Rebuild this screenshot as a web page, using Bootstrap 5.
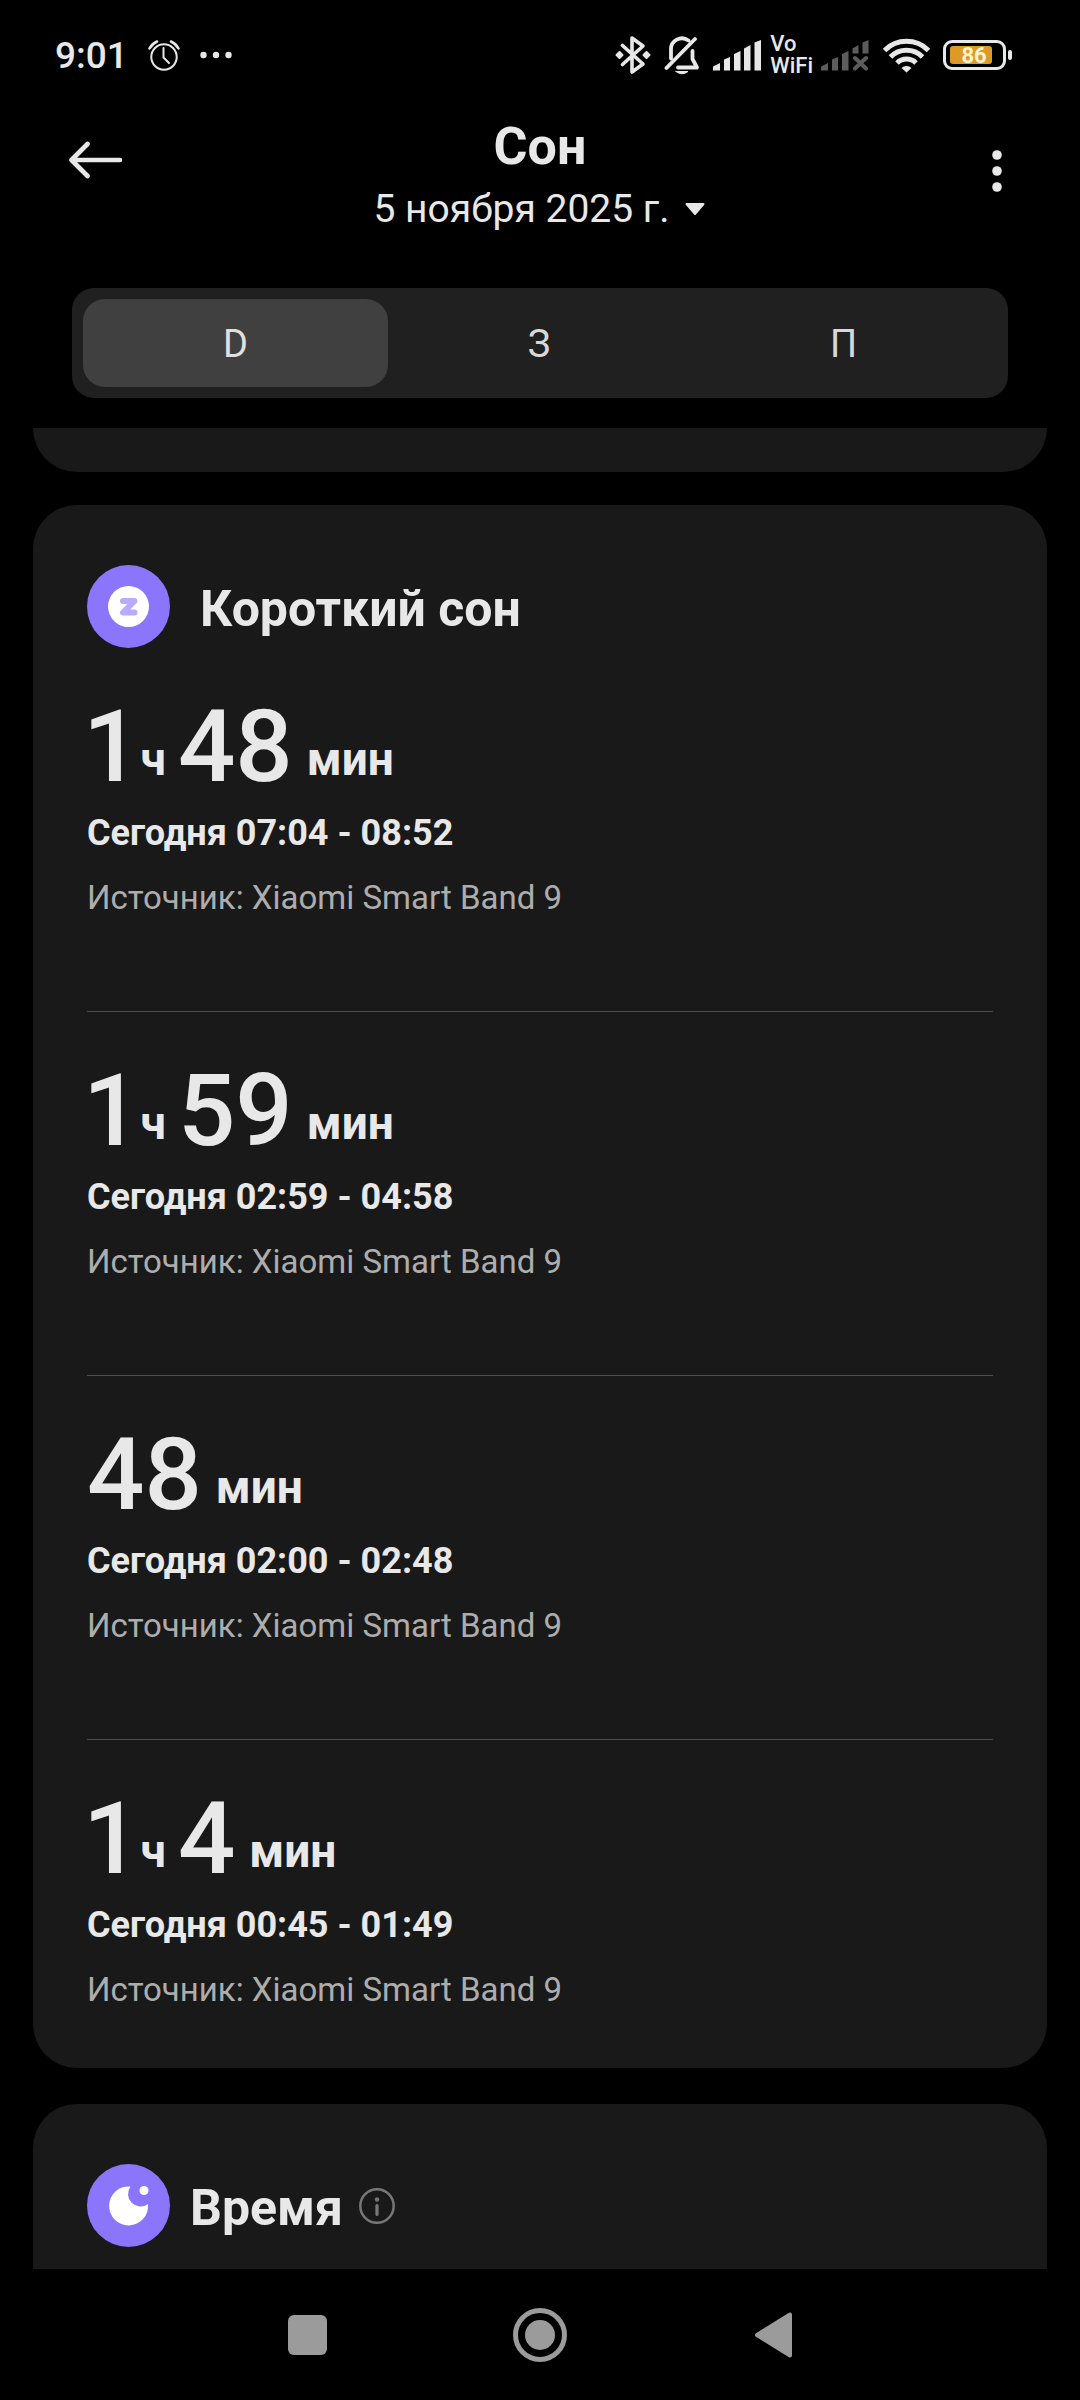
<!DOCTYPE html>
<html lang="ru">
<head>
<meta charset="utf-8">
<meta name="viewport" content="width=device-width, initial-scale=1">
<title>Сон</title>
<link href="https://cdn.jsdelivr.net/npm/bootstrap@5.3.0/dist/css/bootstrap.min.css" rel="stylesheet">
<style>
  body { background: #000; color: #e8e8e8; font-family: Roboto, "Noto Sans", sans-serif; }
  svg { display: block; flex: none; }
  .icon-btn { background: none; border: 0; padding: 0; color: inherit; }

  .status-bar { height: 110px; padding: 0 67px 0 55px; }
  .status-left { gap: 20px; }
  .status-time { font-size: 37px; font-weight: 500; line-height: 44px; padding-top: 2px; }
  .status-right { gap: 13px; }
  .signal-group { gap: 8px; }
  .vo-wifi { font-size: 22px; font-weight: 500; line-height: 22px; }
  .battery-level { font-size: 22px; font-weight: 700; font-family: Roboto, sans-serif; }

  .top-bar { padding: 0 68px; }
  .top-bar .icon-btn { flex: none; }
  .top-bar .side-btn { width: 54px; }
  .back-btn { height: 100px; }
  .menu-btn { height: 122px; }
  .title-block { padding-top: 2px; }
  .screen-title { font-size: 52px; font-weight: 700; line-height: 70px; }
  .date-btn { font-size: 39px; line-height: 54px; gap: 15px; }

  .period-tabs { margin: 52px 72px 30px; padding: 11px; border-radius: 22px; background: #202020; }
  .period-tabs .nav-link { height: 88px; padding: 3px 0 0; border-radius: 22px; font-size: 38px; color: #d8d8d8; }
  .period-tabs .nav-link.active { background: #404040; color: #e0e0e0; }

  .feed { padding: 0 33px; }
  .panel { background: #191919; border-radius: 44px; padding: 0 54px; }
  .panel-tail { height: 44px; border-radius: 0 0 44px 44px; margin-bottom: 33px; }
  .panel-naps { padding-top: 60px; margin-bottom: 36px; }
  .panel-cut { padding-top: 60px; border-radius: 44px 44px 0 0; }
  .panel-title { font-size: 50px; font-weight: 700; line-height: 60px; padding-top: 4px; }
  .gap-title { gap: 30px; }
  .gap-title-sm { gap: 20px; }
  .gap-info { gap: 16px; }

  .nap { padding: 49px 0 93px; border-bottom: 1px solid #4c4c4c; }
  .nap:last-child { padding-bottom: 58px; border-bottom: 0; }
  .nap-digits { font-size: 101px; font-weight: 500; line-height: 100px; }
  .nap-unit { font-size: 46px; font-weight: 700; line-height: 76px; }
  .nap-hours { margin-left: -4px; }
  .nap-hours + .nap-unit { margin-right: 12px; }
  .nap-minutes + .nap-unit { margin-left: 14px; }
  .nap-time { font-size: 36px; font-weight: 700; line-height: 44px; margin-top: 14px; }
  .nap-source { font-size: 33px; line-height: 40px; margin-top: 23px; color: #adadad; }

  .system-nav { height: 131px; color: #9b9b9b; }
  .system-nav .icon-btn { width: 233px; }
</style>
</head>
<body>
<div class="d-flex flex-column min-vh-100">
  <div class="status-bar d-flex align-items-center justify-content-between">
    <div class="status-left d-flex align-items-center">
      <span class="status-time">9:01</span>
      <svg width="32" height="32" viewBox="0 0 32 32" fill="none" stroke="currentColor" stroke-width="2" stroke-linecap="round">
        <circle cx="16" cy="18" r="12.7"/><path d="M15.500 9v9.500l5.500 5.500"/><path d="M1.500 9.500A16 16 0 0 1 9 2.500M30.500 9.500A16 16 0 0 0 23 2.500" stroke-width="2.600"/>
      </svg>
      <svg width="32" height="8" viewBox="0 0 32 8" fill="currentColor"><circle cx="3.500" cy="4" r="3.200"/><circle cx="16" cy="4" r="3.200"/><circle cx="28.500" cy="4" r="3.200"/></svg>
    </div>
    <div class="status-right d-flex align-items-center">
      <svg width="36" height="40" viewBox="0 0 36 40" fill="none" stroke="currentColor" stroke-width="3.600" stroke-linejoin="round" stroke-linecap="round">
        <path d="M7.500 10.500 28 29 17 37V3l11 8L7.500 29.500"/><g fill="currentColor" stroke-width="2"><path d="M1.500 20 4.500 17 7.500 20 4.500 23zM28.500 20 31.500 17 34.500 20 31.500 23z"/></g>
      </svg>
      <svg width="36" height="40" viewBox="0 0 36 40" fill="none" stroke="currentColor" stroke-width="3.800" stroke-linecap="round" stroke-linejoin="round">
        <path d="M2.500 33 31 4"/><path d="M7 23.500V15A11 11 0 0 1 24.500 5.500"/><path d="M28.500 16v8L33 32.500H14"/><path d="M12 36.500H24Q18 41 12 36.500z" fill="currentColor" stroke-width="1"/>
      </svg>
      <div class="signal-group d-flex align-items-center">
        <svg width="49" height="32" viewBox="0 0 49 32" fill="currentColor">
          <path d="M0 31.500V27.500L7 24v7.500zM11 31.500V20.500L17 18v13.500zM21 31.500V15L27.500 12v19.500zM31 31.500V9.500L37.500 6v25.500zM41.500 31.500V3.500L48 1v30.500z"/>
        </svg>
        <div class="vo-wifi"><div>Vo</div><div>WiFi</div></div>
        <svg width="49" height="32" viewBox="0 0 49 32" fill="#5c5c5c">
          <path d="M0 31.500V27.500L7 24v7.500zM11 31.500V20.500L17 18v13.500zM21 31.500V15L27.500 12v19.500zM31.500 14.500V9.500L37.500 6v8.500zM41.500 14.500V3.500L47.500 1v13.500z"/><path d="M34 19 45 29.500M45 19 34 29.500" stroke="#5c5c5c" stroke-width="4" stroke-linecap="round"/>
        </svg>
      </div>
      <svg width="47" height="36" viewBox="0 0 47 36" fill="none" stroke="currentColor" stroke-width="5">
        <path d="M1.500 13.500A31 31 0 0 1 45.500 13.500M7.500 20A22.500 22.500 0 0 1 39.500 20M14 26A13.500 13.500 0 0 1 33 26"/><path d="M23.500 35.500 18.500 31A7 7 0 0 1 28.500 31z" fill="currentColor" stroke="none"/>
      </svg>
      <svg width="70" height="30" viewBox="0 0 70 30">
        <rect x="1.500" y="1.500" width="60" height="27" rx="7.500" fill="none" stroke="currentColor" stroke-width="3"/>
        <rect x="7" y="6" width="42" height="18" rx="3" fill="#dd9a25"/><rect x="65" y="10" width="4" height="10" rx="2" fill="currentColor"/>
        <text class="battery-level" x="31" y="23" text-anchor="middle" fill="#fff3cf">86</text>
      </svg>
    </div>
  </div>

  <header class="top-bar d-flex align-items-start justify-content-between">
    <button type="button" class="icon-btn side-btn back-btn" aria-label="Назад">
      <svg width="54" height="40" viewBox="0 0 54 40" fill="none" stroke="currentColor" stroke-width="4.600" stroke-linecap="round" stroke-linejoin="round"><path d="M52 20H3.500M19.500 4 3.500 20l16 16"/></svg>
    </button>
    <div class="title-block d-flex flex-column align-items-center">
      <h1 class="screen-title m-0">Сон</h1>
      <button type="button" class="icon-btn date-btn d-flex align-items-center text-nowrap">
        <span>5 ноября 2025 г.</span>
        <svg width="22" height="14" viewBox="0 0 22 14" fill="currentColor" stroke="currentColor" stroke-width="2" stroke-linejoin="round"><path d="M2.500 2h17L11 12z"/></svg>
      </button>
    </div>
    <button type="button" class="icon-btn side-btn menu-btn d-flex align-items-center justify-content-end" aria-label="Меню">
      <svg width="30" height="44" viewBox="0 0 30 44" fill="currentColor"><circle cx="15" cy="6" r="4.800"/><circle cx="15" cy="22" r="4.800"/><circle cx="15" cy="38" r="4.800"/></svg>
    </button>
  </header>

  <div class="period-tabs nav nav-pills nav-fill flex-nowrap" role="tablist">
    <div class="nav-item col"><button type="button" class="nav-link active" role="tab" aria-selected="true">D</button></div>
    <div class="nav-item col"><button type="button" class="nav-link" role="tab" aria-selected="false">З</button></div>
    <div class="nav-item col"><button type="button" class="nav-link" role="tab" aria-selected="false">П</button></div>
  </div>

  <main class="feed d-flex flex-column flex-grow-1">
    <div class="panel panel-tail"></div>

    <section class="panel panel-naps">
      <div class="d-flex align-items-center gap-title">
        <svg width="83" height="83" viewBox="0 0 83 83"><circle cx="41.500" cy="41.500" r="41.500" fill="#8b75fb"/><circle cx="41.500" cy="41.500" r="20.500" fill="#fff"/><path d="M36 36H47.500L36 47.500H47.500" fill="none" stroke="#b9abff" stroke-width="6" stroke-linecap="round" stroke-linejoin="round"/></svg>
        <h2 class="panel-title m-0">Короткий сон</h2>
      </div>

      <div>
        <article class="nap">
          <div class="d-flex align-items-end">
            <span class="nap-digits nap-hours">1</span><span class="nap-unit">ч</span><span class="nap-digits nap-minutes">48</span><span class="nap-unit">мин</span>
          </div>
          <div class="nap-time">Сегодня 07:04 - 08:52</div>
          <div class="nap-source">Источник: Xiaomi Smart Band 9</div>
        </article>
        <article class="nap">
          <div class="d-flex align-items-end">
            <span class="nap-digits nap-hours">1</span><span class="nap-unit">ч</span><span class="nap-digits nap-minutes">59</span><span class="nap-unit">мин</span>
          </div>
          <div class="nap-time">Сегодня 02:59 - 04:58</div>
          <div class="nap-source">Источник: Xiaomi Smart Band 9</div>
        </article>
        <article class="nap">
          <div class="d-flex align-items-end">
            <span class="nap-digits nap-minutes">48</span><span class="nap-unit">мин</span>
          </div>
          <div class="nap-time">Сегодня 02:00 - 02:48</div>
          <div class="nap-source">Источник: Xiaomi Smart Band 9</div>
        </article>
        <article class="nap">
          <div class="d-flex align-items-end">
            <span class="nap-digits nap-hours">1</span><span class="nap-unit">ч</span><span class="nap-digits nap-minutes">4</span><span class="nap-unit">мин</span>
          </div>
          <div class="nap-time">Сегодня 00:45 - 01:49</div>
          <div class="nap-source">Источник: Xiaomi Smart Band 9</div>
        </article>
      </div>
    </section>

    <section class="panel panel-cut flex-grow-1">
      <div class="d-flex align-items-center gap-title-sm">
        <svg width="83" height="83" viewBox="0 0 83 83"><circle cx="41.500" cy="41.500" r="41.500" fill="#8b75fb"/><path d="M43.500 22.500A19.500 19.500 0 1 0 61 40A12.500 12.500 0 0 1 43.500 22.500z" fill="#fff"/><circle cx="57" cy="26.500" r="4.500" fill="#fff"/></svg>
        <div class="d-flex align-items-center gap-info">
          <h2 class="panel-title m-0">Время</h2>
          <button type="button" class="icon-btn" aria-label="Сведения">
            <svg width="36" height="36" viewBox="0 0 36 36" fill="none" stroke="#777" stroke-width="2.500"><circle cx="18" cy="18" r="16.700"/><circle cx="18" cy="11.500" r="2.200" fill="#777" stroke="none"/><path d="M18 17.500v9" stroke-width="3.200" stroke-linecap="round"/></svg>
          </button>
        </div>
      </div>
    </section>
  </main>

  <nav class="system-nav d-flex justify-content-center">
    <button type="button" class="icon-btn d-flex align-items-center justify-content-center" aria-label="Недавние"><svg width="39" height="40" viewBox="0 0 39 40" fill="currentColor"><rect width="39" height="40" rx="6"/></svg></button>
    <button type="button" class="icon-btn d-flex align-items-center justify-content-center" aria-label="Домой"><svg width="54" height="54" viewBox="0 0 54 54" fill="currentColor"><circle cx="27" cy="27" r="24.500" fill="none" stroke="currentColor" stroke-width="5"/><circle cx="27" cy="27" r="15"/></svg></button>
    <button type="button" class="icon-btn d-flex align-items-center justify-content-center" aria-label="Назад"><svg width="37" height="46" viewBox="0 0 37 46" fill="currentColor" stroke="currentColor" stroke-width="4" stroke-linejoin="round"><path d="M2 23 35 2.500V43.500z"/></svg></button>
  </nav>
</div>
<script src="https://cdn.jsdelivr.net/npm/bootstrap@5.3.0/dist/js/bootstrap.bundle.min.js"></script>
</body>
</html>
